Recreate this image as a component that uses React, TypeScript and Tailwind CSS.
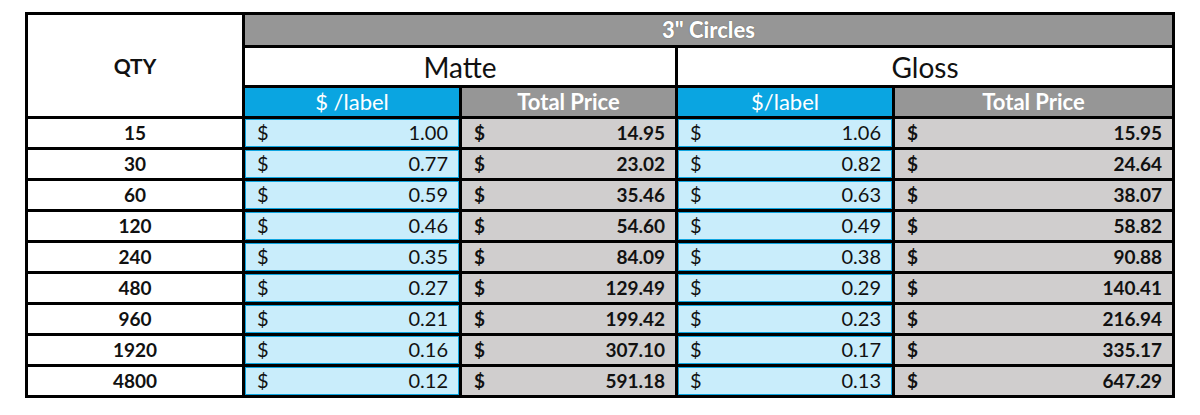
import React from 'react';

// price rows: qty, matte per label, matte total, gloss per label, gloss total
const rows = [
  ['15', '1.00', '14.95', '1.06', '15.95'],
  ['30', '0.77', '23.02', '0.82', '24.64'],
  ['60', '0.59', '35.46', '0.63', '38.07'],
  ['120', '0.46', '54.60', '0.49', '58.82'],
  ['240', '0.35', '84.09', '0.38', '90.88'],
  ['480', '0.27', '129.49', '0.29', '140.41'],
  ['960', '0.21', '199.42', '0.23', '216.94'],
  ['1920', '0.16', '307.10', '0.17', '335.17'],
  ['4800', '0.12', '591.18', '0.13', '647.29'],
];

const PerLabel = ({ value }: { value: string }) => (
  <div className="flex items-center justify-between bg-[#c9edfb] border border-[#0ea5e0] pl-[11px] pr-[10px] pb-[2px] text-[20px] text-[#111]">
    <span>$</span>
    <span>{value}</span>
  </div>
);

const Total = ({ value }: { value: string }) => (
  <div className="flex items-center justify-between bg-[#d0cece] pl-[12px] pr-[10px] pb-[2px] text-[19px] font-bold text-[#111]">
    <span>$</span>
    <span>{value}</span>
  </div>
);

export default function App() {
  return (
    <div
      className="w-[1200px] h-[415px] bg-white pt-[12px] pl-[25px]"
      style={{ fontFamily: 'Lato, "Open Sans", sans-serif' }}
    >
      <div className="inline-grid bg-black p-[3px] gap-[3px] grid-cols-[214px_214px_213px_214px_277px] grid-rows-[30px_37px_28px_repeat(9,28px)] leading-none">
        {/* --- header --- */}
        <div className="row-span-3 bg-white flex items-center justify-center text-[21px] font-bold text-[#111]">
          QTY
        </div>
        <div className="col-span-4 bg-[#969696] flex items-center justify-center text-[22px] font-black text-white [text-shadow:0_0_1px_#444]">
          3" Circles
        </div>
        <div className="col-span-2 bg-white flex items-center justify-center text-[28px] text-[#111]">
          Matte
        </div>
        <div className="col-span-2 bg-white flex items-center justify-center text-[28px] text-[#111]">
          Gloss
        </div>
        <div className="bg-[#0aa5e1] flex items-center justify-center text-[22px] text-white">$ /label</div>
        <div className="bg-[#969696] flex items-center justify-center text-[22px] font-bold text-white">Total Price</div>
        <div className="bg-[#0aa5e1] flex items-center justify-center text-[22px] text-white">$/label</div>
        <div className="bg-[#969696] flex items-center justify-center text-[22px] font-bold text-white">Total Price</div>

        {/* --- data --- */}
        {rows.map((r) => (
          <React.Fragment key={r[0]}>
            <div className="bg-white flex items-center justify-center pb-[2px] text-[19px] font-bold text-[#111]">{r[0]}</div>
            <PerLabel value={r[1]} />
            <Total value={r[2]} />
            <PerLabel value={r[3]} />
            <Total value={r[4]} />
          </React.Fragment>
        ))}
      </div>
    </div>
  );
}
